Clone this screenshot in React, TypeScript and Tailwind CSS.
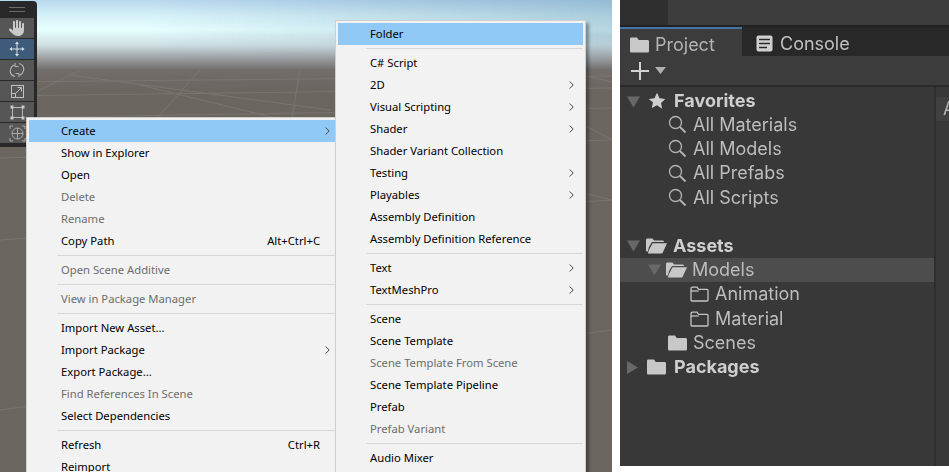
import { FaHand } from 'react-icons/fa6'

type Entry =
  | { sep: true }
  | { label: string; off?: boolean; sub?: boolean; keys?: string; on?: boolean }

const line: Entry = { sep: true }

const leftMenu: Entry[] = [
  { label: 'Create', sub: true, on: true },
  { label: 'Show in Explorer' },
  { label: 'Open' },
  { label: 'Delete', off: true },
  { label: 'Rename', off: true },
  { label: 'Copy Path', keys: 'Alt+Ctrl+C' },
  line,
  { label: 'Open Scene Additive', off: true },
  line,
  { label: 'View in Package Manager', off: true },
  line,
  { label: 'Import New Asset...' },
  { label: 'Import Package', sub: true },
  { label: 'Export Package...' },
  { label: 'Find References In Scene', off: true },
  { label: 'Select Dependencies' },
  line,
  { label: 'Refresh', keys: 'Ctrl+R' },
  { label: 'Reimport' },
]

const rightMenu: Entry[] = [
  { label: 'Folder', on: true },
  line,
  { label: 'C# Script' },
  { label: '2D', sub: true },
  { label: 'Visual Scripting', sub: true },
  { label: 'Shader', sub: true },
  { label: 'Shader Variant Collection' },
  { label: 'Testing', sub: true },
  { label: 'Playables', sub: true },
  { label: 'Assembly Definition' },
  { label: 'Assembly Definition Reference' },
  line,
  { label: 'Text', sub: true },
  { label: 'TextMeshPro', sub: true },
  line,
  { label: 'Scene' },
  { label: 'Scene Template' },
  { label: 'Scene Template From Scene', off: true },
  { label: 'Scene Template Pipeline' },
  { label: 'Prefab' },
  { label: 'Prefab Variant', off: true },
  line,
  { label: 'Audio Mixer' },
]

function Chevron() {
  return (
    <svg width="5" height="8" viewBox="0 0 5 8" fill="none" stroke="#444" strokeWidth="1" className="shrink-0">
      <path d="M0.7 0.5 L4.2 4 L0.7 7.5" />
    </svg>
  )
}

function ContextMenu({ items, className, chevronPad }: { items: Entry[]; className: string; chevronPad: string }) {
  return (
    <div className={`absolute flex flex-col bg-[#f2f2f2] border border-[#cfcfcf] p-[2px] shadow-[3px_3px_3px_rgba(0,0,0,0.35)] font-['Noto_Sans','Open_Sans',sans-serif] text-[11.25px] ${className}`}>
      {items.map((item, i) => {
        if ('sep' in item) {
          return (
            <div key={i} className="h-[7px] shrink-0 pl-[28px] pt-[3px]">
              <div className="h-px bg-[#d7d7d7]" />
            </div>
          )
        }
        return (
          <div
            key={item.label}
            className={`flex h-[22px] shrink-0 items-center pl-[32px] ${chevronPad} ${item.on ? 'bg-[#90c8f6]' : ''} ${item.off ? 'text-[#6d6d6d]' : 'text-black'}`}
          >
            <span>{item.label}</span>
            {item.keys && <span className="ml-auto mr-[10px]">{item.keys}</span>}
            {item.sub && (
              <span className="ml-auto">
                <Chevron />
              </span>
            )}
          </div>
        )
      })}
    </div>
  )
}

function ToolButton({ active, children }: { active?: boolean; children: React.ReactNode }) {
  return (
    <div className={`flex h-[20px] w-[34px] items-center justify-center ${active ? 'bg-[#3e5b7a]' : 'bg-[#565656]'}`}>
      {children}
    </div>
  )
}

function SceneToolbar() {
  return (
    <div className="absolute left-0 top-[1px] flex h-[146px] w-[37px] flex-col gap-px rounded-r-[4px] bg-[#282828]">
      <div className="flex h-[16px] flex-col items-center justify-center gap-[3px] pr-[3px]">
        <div className="h-px w-[16px] bg-[#6a6a6a]" />
        <div className="h-px w-[16px] bg-[#6a6a6a]" />
      </div>
      <ToolButton>
        <FaHand className="text-[#c8c8c8]" size={16} />
      </ToolButton>
      <ToolButton active>
        <svg width="16" height="16" viewBox="0 0 16 16" fill="none" stroke="#d6e2ec" strokeWidth="1">
          <path d="M8 2V14M2 8H14" />
          <path d="M8 0.5L10 3H6ZM8 15.5L10 13H6ZM0.5 8L3 6V10ZM15.5 8L13 6V10Z" fill="#d6e2ec" stroke="none" />
        </svg>
      </ToolButton>
      <ToolButton>
        <svg width="16" height="16" viewBox="0 0 16 16" fill="none" stroke="#b4b4b4" strokeWidth="1.1">
          <path d="M6 14.5C2.5 13.5 0.8 10.5 1.5 7.3C2 5 3.6 3.6 5 3" />
          <path d="M10 1.5C13.5 2.5 15.2 5.5 14.5 8.7C14 11 12.4 12.4 11 13" />
          <path d="M6 1V4.5H9.5M10 15V11.5H6.5" />
        </svg>
      </ToolButton>
      <ToolButton>
        <svg width="15" height="15" viewBox="0 0 15 15" fill="none" stroke="#c0c0c0" strokeWidth="1">
          <rect x="1.5" y="1.5" width="12" height="12" />
          <rect x="1.5" y="9.5" width="4" height="4" />
          <path d="M6 9L11 4M7.5 3.5H11.5V7.5" />
        </svg>
      </ToolButton>
      <ToolButton>
        <svg width="15" height="15" viewBox="0 0 15 15" fill="none" stroke="#b8b8b8" strokeWidth="1">
          <rect x="2.5" y="2.5" width="10" height="10" />
          <g fill="#c8c8c8" stroke="none">
            <rect x="0.5" y="0.5" width="3" height="3" />
            <rect x="11.5" y="0.5" width="3" height="3" />
            <rect x="0.5" y="11.5" width="3" height="3" />
            <rect x="11.5" y="11.5" width="3" height="3" />
          </g>
        </svg>
      </ToolButton>
      <ToolButton>
        <svg width="17" height="17" viewBox="0 0 17 17" fill="none" stroke="#a8a8a8" strokeWidth="1">
          <circle cx="8.5" cy="8.5" r="5.5" />
          <path d="M8.5 3V14M3 8.5H14" />
          <path d="M1 4V1H4M13 1H16V4M1 13V16H4M16 13V16H13" />
        </svg>
      </ToolButton>
    </div>
  )
}

function SceneGrid() {
  return (
    <svg className="absolute left-0 top-[70px]" width="612" height="402" fill="none" stroke="#7d7874" strokeWidth="1" opacity="0.8">
      <path d="M0 12L612 6M0 26L612 18M0 48L612 38M0 88L612 70M0 170L612 130M0 340L612 260" />
      <path d="M80 0L0 40M200 0L120 90M300 0L280 120M400 0L520 130M480 0L612 70M70 5L330 40M140 15L612 130M560 0L612 12" />
    </svg>
  )
}

function Caret({ open }: { open: boolean }) {
  return (
    <svg width="13" height="13" viewBox="0 0 13 13" fill="#686868" className="shrink-0">
      {open ? <path d="M0 1.5H13L6.5 12.5Z" /> : <path d="M1 0L12 6.5L1 13Z" />}
    </svg>
  )
}

function FolderIcon({ kind }: { kind: 'solid' | 'open' | 'line' }) {
  if (kind === 'line') {
    return (
      <svg width="19" height="16" viewBox="0 0 19 16" fill="none" stroke="#c4c4c4" strokeWidth="1.3" className="shrink-0">
        <path d="M1 3.2C1 2 1.5 1.2 2.5 1.2H7L8.6 3.4H17C17.6 3.4 18 3.8 18 4.4V14C18 14.6 17.6 15 17 15H2C1.4 15 1 14.6 1 14Z" />
        <path d="M1 5H8.6" />
      </svg>
    )
  }
  if (kind === 'open') {
    return (
      <svg width="21" height="16" viewBox="0 0 21 16" fill="#c8c8c8" className="shrink-0">
        <path d="M0 2C0 1 .6.5 1.5.5H6.5L8 2.6H16.5C17.4 2.6 18 3.2 18 4H6L3 9L1.8 13.5H1C.4 13.5 0 13 0 12.5Z" />
        <path d="M6.6 5.2H21L17 14C16.7 15 16 15.5 15 15.5H1.8L3 12Z" />
      </svg>
    )
  }
  return (
    <svg width="19" height="16" viewBox="0 0 19 16" fill="#c8c8c8" className="shrink-0">
      <path d="M0 2C0 1 .6.5 1.5.5H7L8.8 3H17.5C18.4 3 19 3.6 19 4.5V14C19 15 18.4 15.5 17.5 15.5H1.5C.6 15.5 0 15 0 14Z" />
    </svg>
  )
}

function SearchIcon() {
  return (
    <svg width="19" height="19" viewBox="0 0 19 19" fill="none" stroke="#b4b4b4" strokeWidth="1.3" className="shrink-0">
      <circle cx="7.5" cy="7.5" r="6" />
      <path d="M12 12L17.5 17.5" strokeWidth="1.8" />
    </svg>
  )
}

function Row({
  indent,
  caret,
  icon,
  label,
  bold,
  selected,
  gap,
}: {
  indent: string
  caret?: boolean
  icon: React.ReactNode
  label: string
  bold?: boolean
  selected?: boolean
  gap: string
}) {
  return (
    <div className={`flex h-[24.4px] shrink-0 items-center ${gap} ${indent} ${selected ? 'bg-[#4d4d4d]' : ''} ${bold ? 'font-bold text-[#cfcfcf]' : 'text-[#bdbdbd]'}`}>
      {caret !== undefined && <Caret open={caret} />}
      {icon}
      <span>{label}</span>
    </div>
  )
}

function ProjectPanel() {
  return (
    <div className="ml-[8px] flex h-[466px] w-[329px] flex-col bg-[#383838] font-['Inter','Liberation_Sans',sans-serif] text-[18px] leading-none blur-[0.4px]">
      <div className="flex h-[25px] shrink-0 bg-[#3c3c3c]">
        <div className="w-[48px] bg-[#2f2f2f]" />
      </div>
      <div className="flex h-[31px] shrink-0 border-t-2 border-[#222222] bg-[#282828]">
        <div className="flex w-[122px] items-center gap-[6px] border-t-2 border-[#3f76a6] bg-[#3c3c3c] pl-[10px] pt-[5px] text-[#b4b4b4]">
          <FolderIcon kind="solid" />
          <span>Project</span>
        </div>
        <div className="flex items-center gap-[7px] pl-[14px] pt-[4px] text-[#c0c0c0]">
          <svg width="17" height="17" viewBox="0 0 17 17" className="shrink-0">
            <rect x="0.5" y="0.5" width="16" height="16" rx="2" fill="#d0d0d0" />
            <path d="M3 4.5H14M3 8.5H14M3 12.5H11" stroke="#282828" strokeWidth="1.5" />
          </svg>
          <span>Console</span>
        </div>
      </div>
      <div className="flex h-[31px] shrink-0 items-center gap-[5px] border-b-2 border-[#2a2a2a] bg-[#3c3c3c] pl-[10px]">
        <svg width="20" height="20" viewBox="0 0 20 20" stroke="#d2d2d2" strokeWidth="2">
          <path d="M10 1V19M1 10H19" />
        </svg>
        <svg width="11" height="7" viewBox="0 0 11 7" fill="#b0b0b0">
          <path d="M0 0H11L5.5 7Z" />
        </svg>
      </div>
      <div className="flex min-h-0 flex-1">
        <div className="flex w-[316px] shrink-0 flex-col border-r-2 border-[#2e2e2e] pt-[1px]">
          <Row
            indent="pl-[7px] pt-[2px]"
            caret
            bold
            gap="gap-[8px]"
            icon={
              <svg width="18" height="18" viewBox="0 0 24 24" fill="#cfcfcf" className="shrink-0">
                <path d="M12 1l3.4 7.2 7.6 1-5.6 5.3 1.5 7.8L12 17.5l-6.9 3.8 1.5-7.8L1 9.2l7.6-1z" />
              </svg>
            }
            label="Favorites"
          />
          {['All Materials', 'All Models', 'All Prefabs', 'All Scripts'].map((name) => (
            <Row key={name} indent="pl-[48px]" gap="gap-[6px]" icon={<SearchIcon />} label={name} />
          ))}
          <div className="h-[23.4px] shrink-0" />
          <Row indent="pl-[7px]" caret bold gap="gap-[6px]" icon={<FolderIcon kind="open" />} label="Assets" />
          <Row indent="pl-[28px]" caret selected gap="gap-[5px]" icon={<FolderIcon kind="open" />} label="Models" />
          <Row indent="pl-[70px]" gap="gap-[6px]" icon={<FolderIcon kind="line" />} label="Animation" />
          <Row indent="pl-[70px]" gap="gap-[6px]" icon={<FolderIcon kind="line" />} label="Material" />
          <Row indent="pl-[48px]" gap="gap-[6px]" icon={<FolderIcon kind="solid" />} label="Scenes" />
          <Row indent="pl-[6px]" caret={false} bold gap="gap-[8px]" icon={<FolderIcon kind="solid" />} label="Packages" />
        </div>
        <div className="min-w-0 flex-1">
          <div className="mt-[10px] flex h-[24px] items-center overflow-hidden bg-[#404040] pl-[7px] text-[#b4b4b4]">A</div>
        </div>
      </div>
    </div>
  )
}

export default function App() {
  return (
    <div className="flex h-[472px] w-[949px] overflow-hidden bg-white">
      <div className="relative h-[472px] w-[612px] shrink-0 overflow-hidden bg-[linear-gradient(to_bottom,#b8d8ee_0px,#d6f2f8_16px,#e6ffff_30px,#cfdfe2_45px,#94979a_60px,#726d6a_70px,#6c6661_90px,#6c6661_472px)]">
        {/* sky gets darker towards the right edge */}
        <div className="absolute left-0 top-0 h-[60px] w-full bg-[linear-gradient(to_right,rgba(60,110,150,0)_150px,rgba(60,110,150,0.28)_612px)] [mask-image:linear-gradient(to_bottom,black_35px,transparent_60px)]" />
        <SceneGrid />
        <SceneToolbar />
        <ContextMenu items={leftMenu} chevronPad="pr-[5px]" className="left-[26px] top-[117px] h-[370px] w-[312px]" />
        <ContextMenu items={rightMenu} chevronPad="pr-[9px]" className="left-[335px] top-[20px] h-[470px] w-[251px]" />
      </div>
      <ProjectPanel />
    </div>
  )
}
